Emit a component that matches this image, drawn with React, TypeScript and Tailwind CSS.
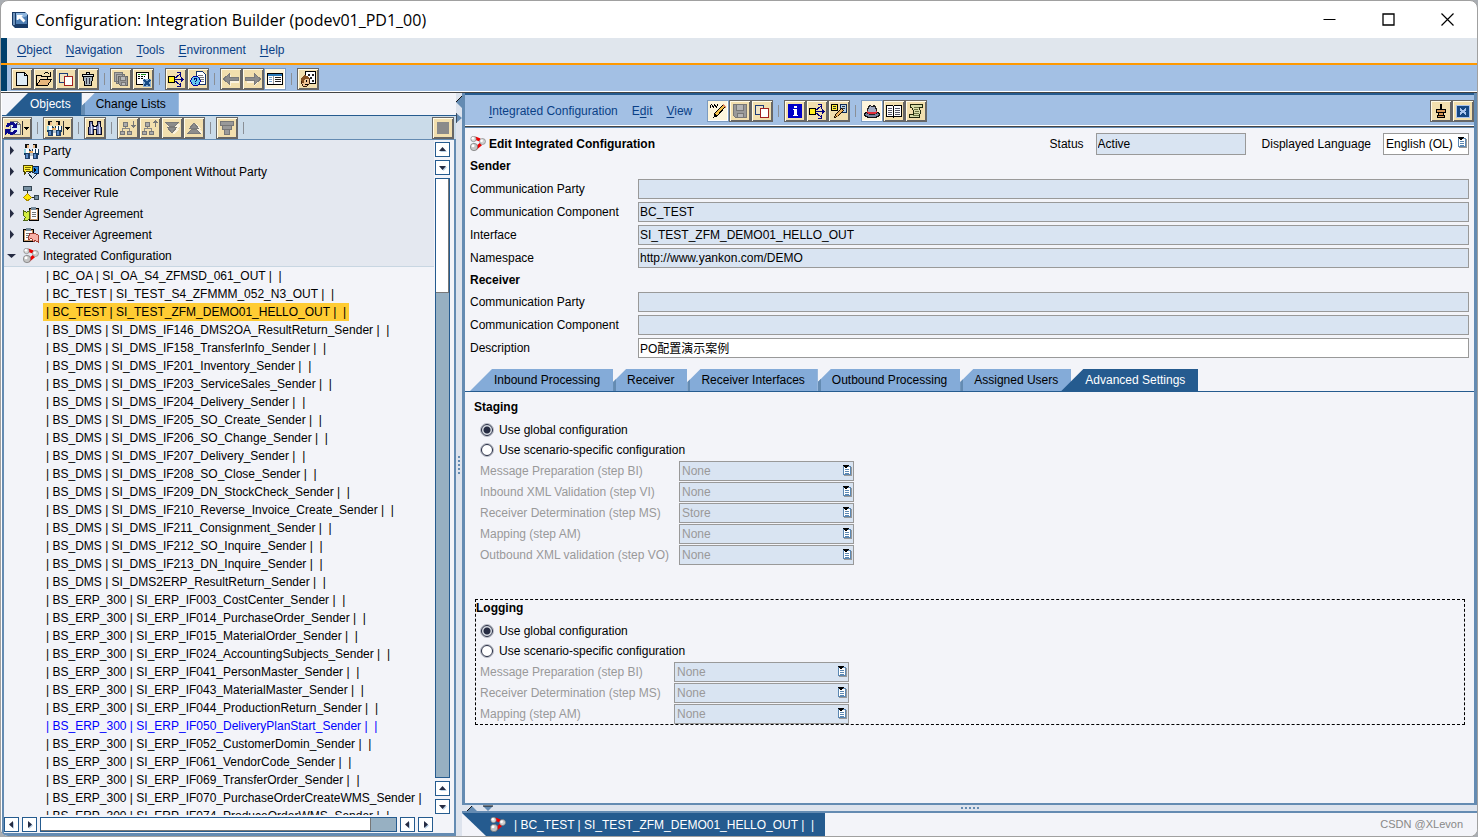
import React, { useState } from "react";
import clsx from "clsx";

type IconName =
  | "new" | "open" | "copy" | "trash" | "saveAll" | "activate" | "whereUsed" | "helpDoc"
  | "back" | "forward" | "tableView" | "cache" | "refresh" | "party" | "find"
  | "treeDown" | "treeUp" | "collapse" | "expand" | "filter" | "stop" | "component"
  | "rule" | "sender" | "receiver" | "config" | "edit" | "save" | "info" | "compare"
  | "hat" | "book" | "scroll" | "pin" | "close" | "list";

const icons: Record<IconName, React.ReactNode> = {
  new: (
    <>
      <path d="M2.500 1.500h8l3 3v10h-11z" fill="#dcebf5" stroke="#000" />
      <path d="M10.500 1.500v3h3" fill="none" stroke="#000" />
    </>
  ),
  open: (
    <>
      <path d="M.5 14v-9l1-1h3l1 1h6v3" fill="#f4dcb0" stroke="#000" />
      <path d="M.5 14.500l4-6h11l-4 6z" fill="#e8b77c" stroke="#000" />
      <path d="M7.500 3.500c2-3 5-2 6 0M14.500 1v4h-4" fill="none" stroke="#000" />
    </>
  ),
  copy: (
    <>
      <path d="M1.500 2.500h8v9h-8z" fill="#efe3c4" stroke="#1c3c78" />
      <path d="M6.500 5.500h8v9h-8z" fill="#fff" stroke="#a02020" />
    </>
  ),
  trash: (
    <>
      <path d="M3.500 5.500h9l-1 9h-7z" fill="#aab6bf" stroke="#000" />
      <path d="M2.500 3.500h11v2h-11z M6.500 1.500h3v2h-3z" fill="#dde4e8" stroke="#000" />
      <path d="M6.500 7v6M9.500 7v6" stroke="#334" />
    </>
  ),
  saveAll: (
    <>
      <path d="M1.500 1.500h8v9h-8z M3.500 3.500h8v9h-8z" fill="#aaa" stroke="#777" />
      <path d="M5.500 5.500h9v9h-7l-2-2z" fill="#999" stroke="#666" />
      <path d="M7.500 5.500h5v4h-5z M8.500 11.500h4v3h-4z" fill="#bbb" stroke="#777" />
    </>
  ),
  activate: (
    <>
      <path d="M1.500 1.500h12v9l-3 3h-9z" fill="#fff" stroke="#000" />
      <path d="M3 3.500h2M6 3.500h5" stroke="#189018" />
      <path d="M3 5.500h7M3 7.500h2M6 7.500h3" stroke="#000" strokeDasharray="2 1" />
      <path d="M8 8h8v8H8z" fill="#8bb0d6" />
      <path d="M9 9l6 6M15 9l-6 6" stroke="#164a84" strokeWidth="2" />
    </>
  ),
  whereUsed: (
    <>
      <path d="M6 8.500h9M6 8l6-5M6 9l6 5" stroke="#000080" fill="none" />
      <path d="M9 1.500h3.500v4M13 6.500l2 2-2 2M9 15.500h3.500v-4" fill="none" stroke="#000080" />
      <path d="M.5 5.500h6v6h-6z" fill="#ffee20" stroke="#000" />
    </>
  ),
  helpDoc: (
    <>
      <path d="M6.500.5h6l3 3v10h-9z" fill="#fff" stroke="#16356b" />
      <path d="M8 4.500h5M8 6.500h6M9 8.500h5M10 10.500h4" stroke="#777" />
      <circle cx="5.500" cy="10" r="4.700" fill="#63c9ee" stroke="#0000a0" />
      <path d="M4 9c0-2 3-2 3 0 0 1-1.500 1-1.500 2M5.500 12v1" fill="none" stroke="#00006c" />
    </>
  ),
  back: (
    <>
      <path d="M1 8.500l6-6v4h8v4H7v4z" fill="#fff" opacity=".6" transform="translate(1 1)" />
      <path d="M.5 8l6-5.500v4h9v3h-9v4z" fill="#8c8c8c" stroke="#7a7a7a" />
    </>
  ),
  forward: (
    <>
      <path d="M14 8.500l-6-6v4H1v4h7v4z" fill="#fff" opacity=".6" transform="translate(1 1)" />
      <path d="M15.500 8l-6-5.500v4h-9v3h9v4z" fill="#8c8c8c" stroke="#7a7a7a" />
    </>
  ),
  tableView: (
    <>
      <path d="M.5 2.500h15v11H.5z" fill="#fff" stroke="#000" />
      <path d="M1 3h14v2H1z" fill="#2878b8" />
      <path d="M2 6.500h3M2 8.500h3M2 10.500h3" stroke="#70a0cc" />
      <path d="M8 6.500h6M8 8.500h6M8 10.500h6" stroke="#222" />
      <path d="M6.500 5v8" stroke="#999" />
    </>
  ),
  cache: (
    <>
      <path d="M5.500.5h10v12h-10z" fill="#fff" stroke="#000" />
      <path d="M8 3h2v2H8z M12 3h2v2h-2z M10 6h2v2h-2z M12 9h2v2h-2z" fill="#222" />
      <path d="M1.500 8.500l2-3h4l2 3v4l-3 3h-3l-2-3z" fill="#f0c596" stroke="#402008" />
      <path d="M1 8l3-4 4 1 2 3H6l-2 1v3H2z" fill="#855020" />
      <path d="M6 9h1v2H6z M5 13h3v1H5z" fill="#000" />
    </>
  ),
  refresh: (
    <>
      <path d="M5.500 1.500h7l3 3v10h-10z" fill="#dfecf4" stroke="#777" />
      <path d="M12.500 1.500v3h3" fill="none" stroke="#777" />
      <path d="M2 7c1-4 6-4 8-2" fill="none" stroke="#0a0a8c" strokeWidth="3" />
      <path d="M12 2v6H6z" fill="#0a0a8c" />
      <path d="M11 10c-1 4-6 4-8 2" fill="none" stroke="#0a0a8c" strokeWidth="3" />
      <path d="M0 9h7l-7 6z" fill="#0a0a8c" />
    </>
  ),
  party: (
    <>
      <path d="M2 1h4v4H2z M10 1h4v4h-4z" fill="#111" />
      <path d="M4 2h2v3H4z M10 2h2v3h-2z" fill="#f2c08c" />
      <path d="M.5 5.500h6l1 2h1l1-2h6v6h-4l-1 1h-5l-1-1h-4z" fill="#143c60" />
      <path d="M1 6h2v4H1z" fill="#8fd0e0" />
      <path d="M3 6h3v4H3z M10 6h2v4h-2z M13 6h2v4h-2z" fill="#fff" />
      <path d="M6 8h4v2H6z" fill="#e8a860" />
      <path d="M2 11h5v5H2z M10 11h5v5h-5z" fill="#20406a" />
      <path d="M3 11h2v4H3z M11 11h2v4h-2z" fill="#5c8cc8" />
      <path d="M7 10h3v6H7z" fill="#fff" opacity=".7" />
    </>
  ),
  find: (
    <>
      <path d="M2.500 1.500h3v3l1 2h3l1-2v-3h3v4l1 3v6h-5v-5h-3v5h-5v-6l1-3z" fill="#7b85b8" stroke="#080820" />
      <path d="M4.500 4v10M12.500 4v10" stroke="#d8dcf5" />
      <path d="M7 7h2v2H7z" fill="#fff" />
    </>
  ),
  treeDown: (
    <>
      <path d="M5.500 6v3M2.500 12V8.500h7V12" fill="none" stroke="#888" />
      <path d="M3.500 2.500h4v4h-4z M.5 11.500h4v3h-4z M7.500 11.500h4v3h-4z" fill="#aaa" stroke="#777" />
      <path d="M13.500 1v6M11.500 5l2 2 2-2" fill="none" stroke="#777" />
    </>
  ),
  treeUp: (
    <>
      <path d="M5.500 6v3M2.500 12V8.500h7V12" fill="none" stroke="#888" />
      <path d="M3.500 2.500h4v4h-4z M.5 11.500h4v3h-4z M7.500 11.500h4v3h-4z" fill="#aaa" stroke="#777" />
      <path d="M13.500 1v6M11.500 3l2-2 2 2" fill="none" stroke="#777" />
    </>
  ),
  collapse: (
    <>
      <path d="M2 3h13v2l-3 3h2l-5 6-5-6h2L2 5z" fill="#fff" opacity=".6" transform="translate(1 1)" />
      <path d="M1.500 2.500h13l-4 4h-5z M3.500 7.500h9l-4 5h-1z" fill="#8c8c8c" stroke="#7a7a7a" />
    </>
  ),
  expand: (
    <>
      <path d="M2 13h13v-2l-3-3h2L9 2 4 8h2l-4 3z" fill="#fff" opacity=".6" transform="translate(1 1)" />
      <path d="M1.500 13.500h13l-4-4h-5z M3.500 8.500h9l-4-5h-1z" fill="#8c8c8c" stroke="#7a7a7a" />
    </>
  ),
  filter: <path d="M1.500 1.500h13v4h-13z M3.500 5.500h9v4h-9z M5.500 9.500h5v5h-5z" fill="#999" stroke="#777" />,
  stop: <path d="M2 2h12v12H2z" fill="#8a8a8a" />,
  component: (
    <>
      <path d="M9.500 2.500h6v7h-6z" fill="#2d82d8" stroke="#08285c" />
      <path d="M11 4v4l3-2z" fill="#000" />
      <path d="M.5 1.500h9v6h-6l-2 3v-3h-1z" fill="#ffee30" stroke="#4c4400" />
      <path d="M2 3.500h6M2 5.500h5" stroke="#776800" />
      <path d="M5.500 9.500l3-2 5 3-4 4z" fill="#dbe8f2" stroke="#1a2c40" />
    </>
  ),
  rule: (
    <>
      <path d="M4.500 5v5M7 12.500h6" stroke="#222" fill="none" />
      <path d="M.5 1.500h8v4h-8z" fill="#7890a2" stroke="#354654" />
      <path d="M4.500 8.500l4 4-4 3.500-4-3.500z" fill="#ffe600" stroke="#aa8a00" />
      <path d="M11.500 10.500h4v4h-4z" fill="#7890a2" stroke="#354654" />
    </>
  ),
  sender: (
    <>
      <path d="M6.500 2.500h9v12h-9z" fill="#c79465" stroke="#000" />
      <path d="M8 4h6v9H8z" fill="#fff" />
      <path d="M8 1h5v3H8z" fill="#73899a" />
      <path d="M9 6.500h4M9 8.500h4M9 10.500h4" stroke="#777" />
      <path d="M.5 4.500l3 2 3-2v8l-2 2h-4l2-3-2-2z" fill="#d4ef42" stroke="#4b6414" />
    </>
  ),
  receiver: (
    <>
      <path d="M.5 2.500h10v12H.5z" fill="#c79465" stroke="#000" />
      <path d="M2 4h7v9H2z" fill="#fff" />
      <path d="M3 1h5v3H3z" fill="#73899a" />
      <path d="M3 6.500h5M3 8.500h3M3 10.500h2" stroke="#777" />
      <path d="M6.500 6.500h6l3 2v7l-3-2-2 1-2-3-3 1z" fill="#f7b0a6" stroke="#a03c30" />
    </>
  ),
  config: (
    <>
      <path d="M5 2l5 2M11 8l-6 5" stroke="#f00000" strokeWidth="3" />
      <circle cx="3.500" cy="3" r="2.700" fill="#d8d8d8" stroke="#777" strokeWidth=".6" />
      <circle cx="12.500" cy="5.500" r="3" fill="#d0d0d0" stroke="#777" strokeWidth=".6" />
      <circle cx="4" cy="11" r="3.700" fill="#c4c4c4" stroke="#666" strokeWidth=".6" />
      <circle cx="2.800" cy="2.300" r="1.200" fill="#fff" />
      <circle cx="11.600" cy="4.700" r="1.300" fill="#fff" />
      <circle cx="3" cy="9.800" r="1.500" fill="#fff" />
    </>
  ),
  edit: (
    <>
      <path d="M.5 4.500v-2l1-1 2 3 1-3 2 3 1-3" fill="none" stroke="#000" />
      <path d="M4 14l1-4 8-8 2 2-8 9z" fill="#f3c04c" stroke="#000" />
      <path d="M12 2l1-1 3 3-1 1z" fill="#e08a68" />
      <path d="M4 14l1-3 2 2z" fill="#000" />
    </>
  ),
  save: (
    <>
      <path d="M1.500 1.500h13v13h-11l-2-2z" fill="#999" stroke="#777" />
      <path d="M4.500 1.500h7v6h-7z M5.500 10.500h6v4h-6z" fill="#b4b4b4" stroke="#777" />
    </>
  ),
  info: (
    <>
      <path d="M1 1h14v14H1z" fill="#0000c8" />
      <path d="M7 3h3v2H7z M6 6h4v6h1v1H6v-1h1V7H6z" fill="#fff" />
    </>
  ),
  compare: (
    <>
      <path d="M.5 1.500h6v6h-6z" fill="#ffee30" stroke="#000" />
      <path d="M9.500 1.500h6v8h-6z" fill="#b5d2ea" stroke="#102c58" />
      <path d="M2 3.500h3M2 5.500h3M11 3.500h3M11 5.500h3" stroke="#333" />
      <path d="M3.500 14.500l1-3 6-6 2 2-6 6z" fill="#edb260" stroke="#201000" />
    </>
  ),
  hat: (
    <>
      <ellipse cx="8" cy="11.500" rx="7.500" ry="3" fill="#75819b" stroke="#111" />
      <path d="M3.500 10V6.500l2-4 3 1 2-1 2 4V10c-2 2-7 2-9 0z" fill="#a0aac2" stroke="#222" />
      <path d="M3 8c2 2 8 2 10 0v2c-2 2-8 2-10 0z" fill="#e02c38" />
    </>
  ),
  book: (
    <>
      <path d="M.5 2.500h6l1 1 1-1h7v11h-7l-1 1-1-1h-6z" fill="#fff" stroke="#000" />
      <path d="M7.500 3v11" stroke="#000" />
      <path d="M2 5.500h4M2 7.500h4M2 9.500h4M2 11.500h4M9 5.500h5M9 7.500h5M9 9.500h5M9 11.500h5" stroke="#556" />
    </>
  ),
  scroll: (
    <>
      <path d="M2.500 1.500h12v3h-3l1 4-1 6h-10v-3h4v-4l-2-3h-1z" fill="#d8ddaa" stroke="#20280c" />
      <path d="M6 4.500h5M6 6.500h4M7 8.500h4M6 10.500h5M5 12.500h6" stroke="#6b7344" />
    </>
  ),
  pin: (
    <>
      <path d="M8 1v5" stroke="#000" strokeWidth="2" />
      <path d="M3.500 6.500h9v3h-9z M5.500 9.500h5v3h-5z M4.500 12.500h7v2h-7z" fill="#d99a58" stroke="#000" />
    </>
  ),
  close: (
    <>
      <path d="M1.500 2.500h13v12h-13z" fill="#154784" stroke="#a9c4ee" />
      <path d="M5 6l6 5M11 6l-6 5" stroke="#a9c4ee" strokeWidth="2" />
    </>
  ),
  list: (
    <>
      <path d="M7 4h8v9H7z" fill="#999" />
      <path d="M6.500 3.500h7v8h-7z" fill="#fff" stroke="#5b87b2" />
      <path d="M8 6.500h4M8 8.500h4M8 10.500h4" stroke="#5b87b2" />
      <path d="M6 2h6v1h-1v1h-1v1H8V4H7V3H6z" fill="#000" />
    </>
  ),
};

function Icon({ name }: { name: IconName }) {
  return (
    <svg
      viewBox="0 0 16 16"
      className="size-4 shrink-0"
      shapeRendering={name === "config" ? "auto" : "crispEdges"}
      aria-hidden="true"
    >
      {icons[name]}
    </svg>
  );
}

interface ToolButtonProps {
  icon: IconName;
  pressed?: boolean;
  dropdown?: boolean;
}

function ToolButton({ icon, pressed, dropdown }: ToolButtonProps) {
  return (
    <button
      aria-label={icon}
      className={clsx(
        "flex h-[22px] shrink-0 items-center justify-center border",
        dropdown ? "w-[30px]" : "w-[22px]",
        pressed
          ? "border-[#7c9bc0] bg-[#fdf5dc] shadow-[inset_-1px_-1px_0_#fff]"
          : "border-[#666] bg-[#f2dfae] shadow-[inset_1px_1px_0_#fffbe8,inset_-1px_-1px_0_#666]"
      )}
    >
      <Icon name={icon} />
      {dropdown && (
        <svg viewBox="0 0 9 16" className="h-4 w-[9px]" shapeRendering="crispEdges" aria-hidden="true">
          <path d="M1.500 1v14" stroke="#333" />
          <path d="M3 7h5L5.500 10z" fill="#000" />
        </svg>
      )}
    </button>
  );
}

function Separator() {
  return (
    <span className="flex w-[11px] shrink-0 justify-center">
      <span className="h-3 w-px bg-[#8a8f96]" />
    </span>
  );
}

function MenuItem({ label, mnemonic = 0 }: { label: string; mnemonic?: number }) {
  return (
    <button className="text-[#0a3f86]">
      {label.slice(0, mnemonic)}
      <span className="underline underline-offset-2">{label[mnemonic]}</span>
      {label.slice(mnemonic + 1)}
    </button>
  );
}

const categories: { icon: IconName; label: string; open?: boolean }[] = [
  { icon: "party", label: "Party" },
  { icon: "component", label: "Communication Component Without Party" },
  { icon: "rule", label: "Receiver Rule" },
  { icon: "sender", label: "Sender Agreement" },
  { icon: "receiver", label: "Receiver Agreement" },
  { icon: "config", label: "Integrated Configuration", open: true },
];

const configurations = [
  "| BC_OA | SI_OA_S4_ZFMSD_061_OUT |  |",
  "| BC_TEST | SI_TEST_S4_ZFMMM_052_N3_OUT |  |",
  "| BC_TEST | SI_TEST_ZFM_DEMO01_HELLO_OUT |  |",
  "| BS_DMS | SI_DMS_IF146_DMS2OA_ResultReturn_Sender |  |",
  "| BS_DMS | SI_DMS_IF158_TransferInfo_Sender |  |",
  "| BS_DMS | SI_DMS_IF201_Inventory_Sender |  |",
  "| BS_DMS | SI_DMS_IF203_ServiceSales_Sender |  |",
  "| BS_DMS | SI_DMS_IF204_Delivery_Sender |  |",
  "| BS_DMS | SI_DMS_IF205_SO_Create_Sender |  |",
  "| BS_DMS | SI_DMS_IF206_SO_Change_Sender |  |",
  "| BS_DMS | SI_DMS_IF207_Delivery_Sender |  |",
  "| BS_DMS | SI_DMS_IF208_SO_Close_Sender |  |",
  "| BS_DMS | SI_DMS_IF209_DN_StockCheck_Sender |  |",
  "| BS_DMS | SI_DMS_IF210_Reverse_Invoice_Create_Sender |  |",
  "| BS_DMS | SI_DMS_IF211_Consignment_Sender |  |",
  "| BS_DMS | SI_DMS_IF212_SO_Inquire_Sender |  |",
  "| BS_DMS | SI_DMS_IF213_DN_Inquire_Sender |  |",
  "| BS_DMS | SI_DMS2ERP_ResultReturn_Sender |  |",
  "| BS_ERP_300 | SI_ERP_IF003_CostCenter_Sender |  |",
  "| BS_ERP_300 | SI_ERP_IF014_PurchaseOrder_Sender |  |",
  "| BS_ERP_300 | SI_ERP_IF015_MaterialOrder_Sender |  |",
  "| BS_ERP_300 | SI_ERP_IF024_AccountingSubjects_Sender |  |",
  "| BS_ERP_300 | SI_ERP_IF041_PersonMaster_Sender |  |",
  "| BS_ERP_300 | SI_ERP_IF043_MaterialMaster_Sender |  |",
  "| BS_ERP_300 | SI_ERP_IF044_ProductionReturn_Sender |  |",
  "| BS_ERP_300 | SI_ERP_IF050_DeliveryPlanStart_Sender |  |",
  "| BS_ERP_300 | SI_ERP_IF052_CustomerDomin_Sender |  |",
  "| BS_ERP_300 | SI_ERP_IF061_VendorCode_Sender |  |",
  "| BS_ERP_300 | SI_ERP_IF069_TransferOrder_Sender |  |",
  "| BS_ERP_300 | SI_ERP_IF070_PurchaseOrderCreateWMS_Sender |",
  "| BS_ERP_300 | SI_ERP_IF074_ProduceOrderWMS_Sender |  |",
];

const arrows = {
  up: "M3 8h7L6.500 4z",
  down: "M3 5h7L6.500 9z",
  left: "M8 3v7L4 6.500z",
  right: "M5 3v7l4-3.500z",
};

function ScrollButton({ direction }: { direction: keyof typeof arrows }) {
  return (
    <button aria-label={`Scroll ${direction}`} className="size-[15px] shrink-0 border border-[#255b8f] bg-white">
      <svg viewBox="0 0 13 13" className="size-[13px]" aria-hidden="true">
        <path d={arrows[direction]} fill="#b8d0e6" transform="translate(1 1)" />
        <path d={arrows[direction]} fill="#252b42" />
      </svg>
    </button>
  );
}

function ObjectTree() {
  const [selected, setSelected] = useState(2);

  return (
    <div className="flex min-h-0 flex-1 flex-col border-x-2 border-b-[3px] border-[#648bb2] bg-[#f3f4f9]">
      <div className="flex min-h-0 flex-1">
        <div className="min-w-0 flex-1 overflow-hidden">
          <ul className="border-b border-[#c8d6e2] bg-[#e4e8f0]">
            {categories.map((category) => (
              <li key={category.label} className="flex h-[21px] items-center pl-[3px]">
                <svg viewBox="0 0 9 9" className="mr-[7px] size-[9px]" aria-hidden="true">
                  <path d={category.open ? "M0 3h9L4.500 7z" : "M3 0v9l4-4.500z"} fill="#252b42" />
                </svg>
                <Icon name={category.icon} />
                <span className="ml-1">{category.label}</span>
              </li>
            ))}
          </ul>
          <ul className="pl-[39px]">
            {configurations.map((name, index) => (
              <li key={name} className="h-[18px]">
                <button
                  onClick={() => setSelected(index)}
                  className={clsx(
                    "h-[18px] whitespace-pre pr-[3px] pl-[3px]",
                    index === selected && "bg-[#ffcc33]",
                    name.includes("IF050") && "text-[#0000ff]"
                  )}
                >
                  {name}
                </button>
              </li>
            ))}
          </ul>
        </div>
        <div className="flex w-5 flex-col items-center gap-[3px] pt-[2px] pr-[3px] pb-px">
          <ScrollButton direction="up" />
          <ScrollButton direction="down" />
          <div className="w-[15px] flex-1 border border-[#255b8f] bg-[#97b0c2]">
            <div className="h-[19%] border-r border-b border-[#777] bg-white" />
          </div>
          <ScrollButton direction="up" />
          <ScrollButton direction="down" />
        </div>
      </div>
      <div className="flex h-[18px] items-center gap-[3px] pr-[21px]">
        <ScrollButton direction="left" />
        <ScrollButton direction="right" />
        <div className="h-[15px] flex-1 border border-[#255b8f] bg-[#97b0c2]">
          <div className="h-full w-[93%] border-r border-b border-[#777] bg-white" />
        </div>
        <ScrollButton direction="left" />
        <ScrollButton direction="right" />
      </div>
    </div>
  );
}

function SideTab({ label }: { label: string }) {
  return (
    <button className="border-l-[3px] border-[#648bb2] bg-[#84abd8] pr-[13px] pl-[11px] whitespace-nowrap text-black [clip-path:polygon(13px_0,100%_0,100%_100%,0_100%,0_13px)]">
      {label}
    </button>
  );
}

function LeftPanel() {
  return (
    <aside className="flex w-[454px] shrink-0 flex-col">
      <div className="flex h-[23px] shrink-0 border-b border-[#255b8f] bg-[#f3f4f9] pl-1">
        <button className="bg-[#255b8f] pr-[11px] pl-6 text-white [clip-path:polygon(22px_0,100%_0,100%_100%,0_100%)]">
          Objects
        </button>
        <SideTab label="Change Lists" />
      </div>
      <div className="flex h-6 shrink-0 items-center border-b border-[#648bb2] bg-[#cadbe9]">
        <ToolButton icon="refresh" dropdown />
        <Separator />
        <ToolButton icon="party" dropdown />
        <Separator />
        <ToolButton icon="find" />
        <Separator />
        <ToolButton icon="treeDown" />
        <ToolButton icon="treeUp" />
        <ToolButton icon="collapse" />
        <ToolButton icon="expand" />
        <Separator />
        <ToolButton icon="filter" />
        <Separator />
        <div className="ml-auto pr-[2px]">
          <ToolButton icon="stop" />
        </div>
      </div>
      <ObjectTree />
    </aside>
  );
}

function TextRow({ id, label, value = "", editable }: { id: string; label: string; value?: string; editable?: boolean }) {
  return (
    <div className="flex h-[23px] items-center">
      <label htmlFor={id} className="w-[168px] shrink-0">
        {label}
      </label>
      <input
        id={id}
        defaultValue={value}
        readOnly={!editable}
        className={clsx(
          "h-5 min-w-0 flex-1 border border-[#999] px-px outline-none",
          editable ? "bg-white" : "bg-[#d9e4f2]"
        )}
      />
    </div>
  );
}

interface StepGroupProps {
  name: string;
  labelWidth: string;
  steps: { label: string; value: string }[];
}

function StepGroup({ name, labelWidth, steps }: StepGroupProps) {
  const options = ["Use global configuration", "Use scenario-specific configuration"];

  return (
    <>
      {options.map((option, index) => (
        <label key={option} className="flex h-5 items-center gap-[6px] pl-[5px]">
          <input
            type="radio"
            name={name}
            defaultChecked={index === 0}
            className="size-3 appearance-none rounded-full border border-[#252b42] bg-white outline outline-[#252b42]/30 checked:bg-[radial-gradient(circle,#252b42_3px,#d9dde4_4px)]"
          />
          {option}
        </label>
      ))}
      {steps.map((step, index) => (
        <div key={step.label} className="flex h-[21px] items-center pl-1 text-[#999]">
          <label htmlFor={`${name}-${index}`} className={labelWidth}>
            {step.label}
          </label>
          <div className="relative flex">
            <select
              id={`${name}-${index}`}
              disabled
              className="h-5 w-[175px] appearance-none border border-[#999] bg-[#d9e4f2] px-[2px] opacity-100"
            >
              <option>{step.value}</option>
            </select>
            <span className="pointer-events-none absolute top-[2px] right-px">
              <Icon name="list" />
            </span>
          </div>
        </div>
      ))}
    </>
  );
}

const stagingSteps = [
  { label: "Message Preparation (step BI)", value: "None" },
  { label: "Inbound XML Validation (step VI)", value: "None" },
  { label: "Receiver Determination (step MS)", value: "Store" },
  { label: "Mapping (step AM)", value: "None" },
  { label: "Outbound XML validation (step VO)", value: "None" },
];

const loggingSteps = [
  { label: "Message Preparation (step BI)", value: "None" },
  { label: "Receiver Determination (step MS)", value: "None" },
  { label: "Mapping (step AM)", value: "None" },
];

function Editor() {
  return (
    <main className="flex min-h-0 flex-1 flex-col border-x-[3px] border-b-2 border-[#648bb2] bg-[#f3f4f9]">
      {/* Header */}
      <div className="flex h-8 shrink-0 items-center border-t-2 border-[#255b8f] bg-[#a3c0e4] pt-px pl-6">
        <div className="flex gap-[14px]">
          <MenuItem label="Integrated Configuration" />
          <MenuItem label="Edit" mnemonic={1} />
          <MenuItem label="View" />
        </div>
        <div className="ml-[15px] flex items-center">
          <ToolButton icon="edit" pressed />
          <ToolButton icon="save" />
          <ToolButton icon="copy" />
          <Separator />
          <ToolButton icon="info" />
          <ToolButton icon="whereUsed" />
          <ToolButton icon="compare" />
          <Separator />
          <ToolButton icon="hat" pressed />
          <ToolButton icon="book" />
          <ToolButton icon="scroll" />
        </div>
        <div className="ml-auto flex">
          <ToolButton icon="pin" />
          <ToolButton icon="close" />
        </div>
      </div>
      <div className="h-[3px] shrink-0 border-t border-b border-t-white border-b-[#648bb2] bg-[#444]" />

      {/* Form */}
      <div className="px-[5px] pt-[5px]">
        <div className="flex h-[22px] items-center">
          <Icon name="config" />
          <h1 className="ml-[3px] flex-1 font-bold">Edit Integrated Configuration</h1>
          <label htmlFor="status">Status</label>
          <input
            id="status"
            readOnly
            defaultValue="Active"
            className="mr-4 ml-3 h-[22px] w-[150px] border border-[#999] bg-[#d9e4f2] px-px outline-none"
          />
          <label htmlFor="language">Displayed Language</label>
          <div className="relative ml-3 flex">
            <select id="language" className="h-[22px] w-[86px] appearance-none border border-[#999] bg-white px-[2px] outline-none">
              <option>English (OL)</option>
            </select>
            <span className="pointer-events-none absolute top-[2px] right-px">
              <Icon name="list" />
            </span>
          </div>
        </div>
        <h2 className="flex h-[22px] items-center font-bold">Sender</h2>
        <TextRow id="sender-party" label="Communication Party" />
        <TextRow id="sender-component" label="Communication Component" value="BC_TEST" />
        <TextRow id="sender-interface" label="Interface" value="SI_TEST_ZFM_DEMO01_HELLO_OUT" />
        <TextRow id="sender-namespace" label="Namespace" value="http://www.yankon.com/DEMO" />
        <h2 className="flex h-[21px] items-center font-bold">Receiver</h2>
        <TextRow id="receiver-party" label="Communication Party" />
        <TextRow id="receiver-component" label="Communication Component" />
        <TextRow id="description" label="Description" value="PO配置演示案例" editable />
      </div>

      {/* Tabs */}
      <div className="mt-[10px] flex h-[23px] shrink-0 border-b border-[#255b8f] pl-[5px]">
        <button className="bg-[#84abd8] pr-[13px] pl-6 [clip-path:polygon(22px_0,100%_0,100%_100%,0_100%)]">
          Inbound Processing
        </button>
        <SideTab label="Receiver" />
        <SideTab label="Receiver Interfaces" />
        <SideTab label="Outbound Processing" />
        <SideTab label="Assigned Users" />
        <button className="-ml-[10px] bg-[#255b8f] pr-[13px] pl-6 text-white [clip-path:polygon(22px_0,100%_0,100%_100%,0_100%)]">
          Advanced Settings
        </button>
      </div>
      <div className="px-[9px] pt-[5px]">
        <section>
          <h2 className="mb-[3px] flex h-5 items-center font-bold">Staging</h2>
          <div className="pl-[2px]">
            <StepGroup name="staging" labelWidth="w-[199px]" steps={stagingSteps} />
          </div>
        </section>
        <section className="mt-[34px] ml-px border border-dashed border-black">
          <h2 className="mb-[5px] h-4 leading-4 font-bold">Logging</h2>
          <StepGroup name="logging" labelWidth="w-[194px]" steps={loggingSteps} />
        </section>
      </div>
    </main>
  );
}

export default function App() {
  return (
    <div className="h-screen overflow-hidden bg-[#a9adb2] font-['Liberation_Sans','Noto_Sans_CJK_SC',sans-serif] text-xs text-black">
      <div className="flex h-full flex-col overflow-hidden rounded-lg border border-[#a0a0a0] bg-white">
        {/* Title bar */}
        <header className="flex h-[37px] shrink-0 items-center pr-[23px] pl-[11px]">
          <svg viewBox="0 0 16 16" className="size-4" aria-hidden="true">
            <path d="M0 0h13l3 3v13H3l-3-3z" fill="#173a68" />
            <path d="M1 1h2v12H1z" fill="#6f93bb" />
            <path d="M4 1h11v11H4z" fill="#8fb6de" />
            <path d="M4 8l11-4v8H4z" fill="#4f7fb4" />
            <path d="M5 3h6L9.500 4.500l4 4-2 2-4-4L6 8H5z" fill="#fff" />
          </svg>
          <h1 className="ml-[7px] flex-1 font-['Open_Sans',sans-serif] text-base">
            Configuration: Integration Builder (podev01_PD1_00)
          </h1>
          <div className="flex gap-[46px]">
            <button aria-label="Minimize">
              <svg viewBox="0 0 13 13" className="size-[13px]"><path d="M.5 6.500h12" stroke="#000" /></svg>
            </button>
            <button aria-label="Maximize">
              <svg viewBox="0 0 13 13" className="size-[13px]"><path d="M1 1h11v11H1z" fill="none" stroke="#000" strokeWidth="1.300" /></svg>
            </button>
            <button aria-label="Close">
              <svg viewBox="0 0 13 13" className="size-[13px]"><path d="M.5.5l12 12M12.500.5l-12 12" stroke="#000" strokeWidth="1.200" /></svg>
            </button>
          </div>
        </header>

        {/* Menu and toolbar */}
        <nav className="flex h-[25px] shrink-0 items-center gap-[14px] border-l-[6px] border-[#00406c] bg-[#e0e6ed] pb-[2px] pl-[10px]">
          <MenuItem label="Object" />
          <MenuItem label="Navigation" />
          <MenuItem label="Tools" />
          <MenuItem label="Environment" />
          <MenuItem label="Help" />
        </nav>
        <div className="h-[2px] shrink-0 bg-[#ff9900]" />
        <div className="flex h-[26px] shrink-0 items-center border-l-[6px] border-[#00406c] bg-[#a3c0e4] pt-px pl-1">
          <ToolButton icon="new" />
          <ToolButton icon="open" />
          <ToolButton icon="copy" />
          <ToolButton icon="trash" />
          <Separator />
          <ToolButton icon="saveAll" />
          <ToolButton icon="activate" />
          <Separator />
          <ToolButton icon="whereUsed" />
          <ToolButton icon="helpDoc" />
          <Separator />
          <ToolButton icon="back" />
          <ToolButton icon="forward" />
          <ToolButton icon="tableView" pressed />
          <Separator />
          <ToolButton icon="cache" />
        </div>
        <div className="h-[2px] shrink-0 border-b border-[#444]" />

        <div className="flex min-h-0 flex-1 pl-px">
          <LeftPanel />
          <div className="relative flex w-[6px] shrink-0 flex-col items-center justify-center bg-[#dde3ed]">
            <svg viewBox="0 0 6 30" className="absolute top-[2px] left-0 h-[30px] w-[6px]" aria-hidden="true">
              <path d="M6 1v12L0 7z M0 18v10l6-5z" fill="#648bb2" />
              <path d="M6 1L0 7M0 18v10" stroke="#111" fill="none" />
            </svg>
            <span className="h-[18px] w-[2px] bg-[repeating-linear-gradient(#648bb2_0_2px,transparent_2px_4px)]" />
          </div>
          <div className="flex min-w-0 flex-1 flex-col">
            <Editor />
            <div className="relative flex h-[8px] shrink-0 items-center justify-center border-b-2 border-[#648bb2] bg-[#dde3ed]">
              <svg viewBox="0 0 30 6" className="absolute bottom-0 left-1 h-[6px] w-[30px]" aria-hidden="true">
                <path d="M1 6h10L6 1z M17 1h10l-5 5z" fill="#648bb2" />
                <path d="M1 6l5-5M17 1h10" stroke="#111" fill="none" />
              </svg>
              <span className="h-[2px] w-[18px] bg-[repeating-linear-gradient(to_right,#648bb2_0_2px,transparent_2px_4px)]" />
            </div>
            <footer className="flex h-[23px] shrink-0 items-center bg-[#f3f4f9] pr-[14px]">
              <button className="flex h-full items-center gap-2 bg-[#255b8f] pr-[11px] pl-7 whitespace-pre text-white [clip-path:polygon(0_0,100%_0,100%_100%,24px_100%)]">
                <Icon name="config" />
                {"| BC_TEST | SI_TEST_ZFM_DEMO01_HELLO_OUT |  |"}
              </button>
              <span className="ml-auto text-[11px] text-[#888]">CSDN @XLevon</span>
            </footer>
          </div>
        </div>
      </div>
    </div>
  );
}
